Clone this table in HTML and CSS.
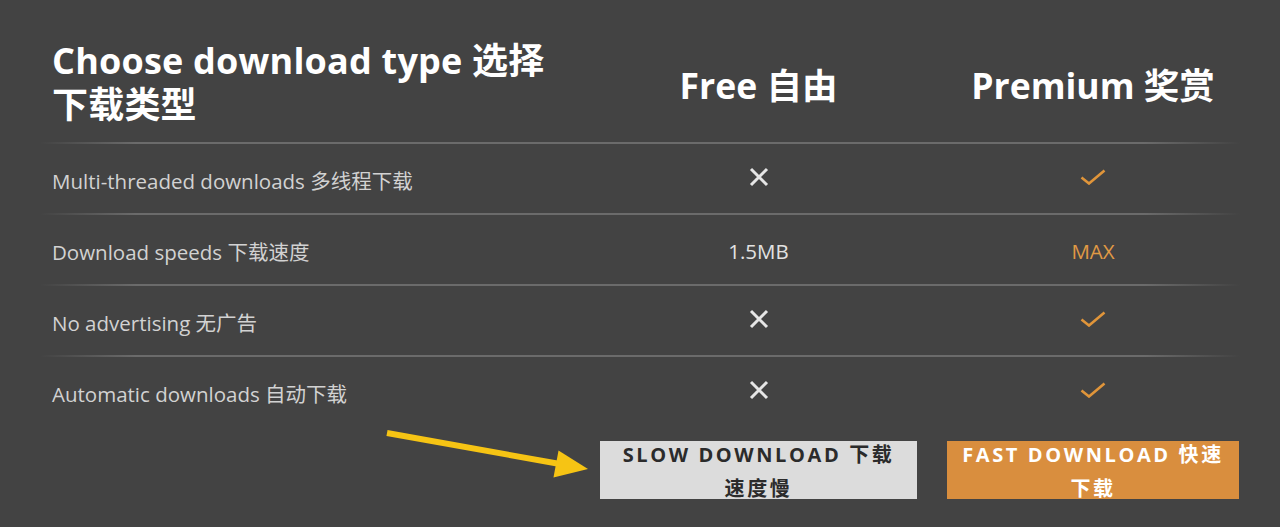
FILE: index.html
```html
<!DOCTYPE html>
<html lang="zh">
<head>
<meta charset="utf-8">
<link rel="stylesheet" href="styles.css">
</head>
<body>
<div class="page">
  <div class="table">
    <div class="row head">
      <h1 class="title">Choose download type 选择<br>下载类型</h1>
      <div class="col-h">Free 自由</div>
      <div class="gap"></div>
      <div class="col-h">Premium 奖赏</div>
    </div>
    <div class="row">
      <div class="feat">Multi-threaded downloads 多线程下载</div>
      <div class="cell"><svg class="x" viewBox="0 0 20 20"><path d="M2 2L18 18M18 2L2 18"/></svg></div>
      <div class="gap"></div>
      <div class="cell"><svg class="ok" viewBox="0 0 26 16"><path d="M1.5 8.5L9 14.5L24.5 1.5"/></svg></div>
    </div>
    <div class="row">
      <div class="feat">Download speeds 下载速度</div>
      <div class="cell val">1.5MB</div>
      <div class="gap"></div>
      <div class="cell val orange">MAX</div>
    </div>
    <div class="row">
      <div class="feat">No advertising 无广告</div>
      <div class="cell"><svg class="x" viewBox="0 0 20 20"><path d="M2 2L18 18M18 2L2 18"/></svg></div>
      <div class="gap"></div>
      <div class="cell"><svg class="ok" viewBox="0 0 26 16"><path d="M1.5 8.5L9 14.5L24.5 1.5"/></svg></div>
    </div>
    <div class="row last">
      <div class="feat">Automatic downloads 自动下载</div>
      <div class="cell"><svg class="x" viewBox="0 0 20 20"><path d="M2 2L18 18M18 2L2 18"/></svg></div>
      <div class="gap"></div>
      <div class="cell"><svg class="ok" viewBox="0 0 26 16"><path d="M1.5 8.5L9 14.5L24.5 1.5"/></svg></div>
    </div>
    <div class="row buttons">
      <div class="feat"></div>
      <a class="btn slow"><span>SLOW DOWNLOAD 下载<br>速度慢</span></a>
      <div class="gap"></div>
      <a class="btn fast"><span>FAST DOWNLOAD 快速<br>下载</span></a>
    </div>
  </div>
  <svg class="arrow" viewBox="0 0 220 60" width="220" height="60">
    <path d="M1 6L174 37" stroke="#f6c414" stroke-width="6" fill="none"/>
    <polygon points="172.5,23.5 202,42 167.5,50.5" fill="#f6c414"/>
  </svg>
</div>
</body>
</html>
```

FILE: styles.css
```css
* { box-sizing: border-box; }
html, body { margin: 0; padding: 0; }
body {
  background: #434343;
  font-family: "Open Sans", "Noto Sans CJK SC", sans-serif;
  color: #d4d4d4;
  width: 1280px;
  height: 527px;
  overflow: hidden;
}
.page {
  position: relative;
  padding-top: 39px;
}
.table {
  margin-left: 40px;
  width: 1200px;
}
.row {
  display: grid;
  grid-template-columns: 548px 317px 30px 292px;
  padding-left: 12px;
  align-items: center;
  height: 71px;
  background-image: linear-gradient(90deg, rgba(110,110,110,0) 0%, #6b6b6b 8%, #6b6b6b 92%, rgba(110,110,110,0) 100%);
  background-size: 100% 2px;
  background-position: bottom left;
  background-repeat: no-repeat;
}
.row.head {
  height: 105px;
  align-items: start;
}
.row.last, .row.buttons { background-image: none; }
.title {
  margin: 0;
  font-size: 36px;
  line-height: 44px;
  font-weight: 700;
  color: #ffffff;
  letter-spacing: 0.2px;
}
.col-h {
  font-size: 35.5px;
  line-height: 44px;
  font-weight: 700;
  color: #ffffff;
  text-align: center;
  margin-top: 24px;
}
.feat {
  font-size: 20.5px;
  color: #d2d2d2;
  padding-top: 0;
}
.cell {
  display: flex;
  justify-content: center;
  align-items: center;
}
.val {
  font-size: 20.5px;
  color: #e2e2e2;
  padding-top: 0;
}
.orange { color: #e09a45; }
.x {
  width: 20px;
  height: 20px;
  margin-top: -6px;
}
.x path { stroke: #e6e6e6; stroke-width: 3; fill: none; }
.ok {
  width: 26px;
  height: 16px;
  margin-top: -6px;
}
.ok path { stroke: #e0953a; stroke-width: 2.6; fill: none; }
.row.buttons {
  height: auto;
  align-items: start;
  padding-top: 13px;
}
.btn {
  display: block;
  height: 58px;
  font-size: 20px;
  line-height: 34px;
  font-weight: 700;
  letter-spacing: 2.6px;
  text-align: center;
  overflow: visible;
}
.btn span { display: block; margin-top: -3px; }
.slow { background: #dcdcdc; color: #2b2b2b; }
.fast { background: #d98e3e; color: #ffffff; }
.arrow {
  position: absolute;
  left: 386px;
  top: 427px;
}
```
